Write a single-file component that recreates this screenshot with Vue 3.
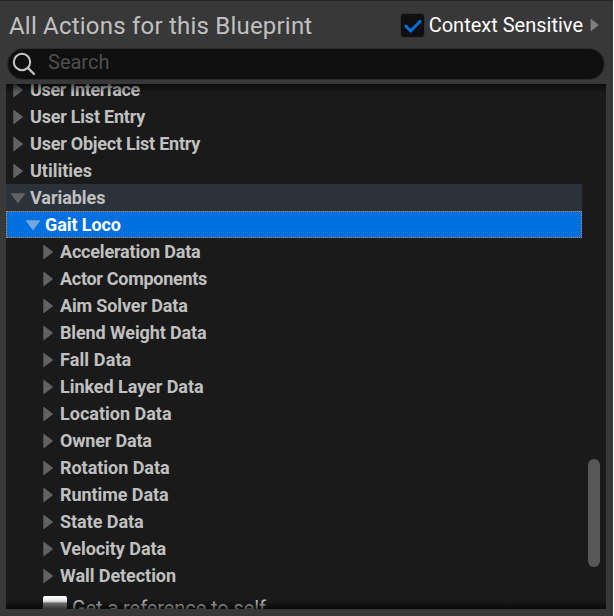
<script setup>
const rows = [
  { label: 'User Interface', level: 0, tracking: -0.36 },
  { label: 'User List Entry', level: 0, tracking: -0.22 },
  { label: 'User Object List Entry', level: 0, tracking: -0.23 },
  { label: 'Utilities', level: 0, tracking: 0 },
  { label: 'Variables', level: 0, open: true, state: 'parent', tracking: -0.05 },
  { label: 'Gait Loco', level: 1, open: true, state: 'selected', tracking: -0.08 },
  ...[
    ['Acceleration Data', -0.18],
    ['Actor Components', -0.29],
    ['Aim Solver Data', -0.14],
    ['Blend Weight Data', -0.12],
    ['Fall Data', 0.12],
    ['Linked Layer Data', -0.05],
    ['Location Data', 0],
    ['Owner Data', -0.18],
    ['Rotation Data', -0.04],
    ['Runtime Data', -0.06],
    ['State Data', -0.05],
    ['Velocity Data', -0.06],
    ['Wall Detection', -0.06],
  ].map(([label, tracking]) => ({ label, level: 2, tracking })),
]
</script>

<template>
  <main class="panel">
    <header class="header">
      <h1 class="title">All Actions for this Blueprint</h1>
      <label class="context">
        <span class="checkbox">
          <svg width="23" height="23" viewBox="0 0 23 23">
            <path d="M4.8 12.1 L9.7 17 L19.2 7.2" fill="none" stroke="#0070e0" stroke-width="2.9" stroke-linecap="round" stroke-linejoin="round" />
          </svg>
        </span>
        <span class="context-label">Context Sensitive</span>
        <svg class="expand" width="9" height="14" viewBox="0 0 9 14">
          <path d="M1 1.2 L8.4 7 L1 12.8 Z" fill="#808080" stroke="#808080" stroke-width="0.8" stroke-linejoin="round" />
        </svg>
      </label>
    </header>

    <div class="search">
      <svg class="lens" width="24" height="24" viewBox="0 0 24 24">
        <circle cx="10" cy="10" r="8.2" fill="none" stroke="#c8c8c8" stroke-width="2" />
        <path d="M15.9 15.9 L22 22" stroke="#c8c8c8" stroke-width="2.2" stroke-linecap="round" />
      </svg>
      <span class="placeholder">Search</span>
    </div>

    <section class="list">
      <div class="rows">
        <div v-for="row in rows" :key="row.label" class="row" :class="['level-' + row.level, row.state]">
          <svg v-if="row.open" class="arrow" width="16" height="16" viewBox="0 0 16 16">
            <path d="M1.3 3.8 H14.7 L8 12.8 Z" />
          </svg>
          <svg v-else class="arrow" width="16" height="16" viewBox="0 0 16 16">
            <path d="M3.8 1.3 V14.7 L12.6 8 Z" />
          </svg>
          <span class="label" :style="{ letterSpacing: row.tracking + 'px' }">{{ row.label }}</span>
        </div>
        <div class="row action">
          <span class="node-icon"></span>
          <span class="action-label">Get a reference to self</span>
        </div>
      </div>
      <div class="track"><div class="thumb"></div></div>
    </section>
  </main>
</template>

<style>
body { margin: 0; background: #fff; }
</style>

<style scoped>
.panel {
  box-sizing: border-box;
  width: 613px;
  height: 616px;
  padding: 0 7px 0 6px;
  display: flex;
  flex-direction: column;
  background: #383838;
  border-top: 1px solid #242424;
  border-bottom: 1px solid #3b3337;
  font-family: Roboto, "Liberation Sans", sans-serif;
  overflow: hidden;
}
.header {
  height: 48px;
  flex: none;
  display: flex;
  justify-content: space-between;
  padding: 0 7px 0 3px;
  white-space: nowrap;
}
.title {
  margin: 10px 0 0;
  font-size: 24px;
  line-height: 30px;
  font-weight: 400;
  color: #c0c0c0;
  letter-spacing: 0.21px;
}
.context { display: flex; align-items: flex-start; }
.checkbox {
  width: 23px;
  height: 23px;
  margin: 13px 5px 0 0;
  border-radius: 3px;
  background: #0f0f0f;
  box-shadow: 0 0 0 1px #303030;
}
.checkbox svg { display: block; }
.context-label {
  margin-top: 12px;
  font-size: 20px;
  line-height: 24px;
  color: #fff;
}
.expand { margin: 17px 0 0 7px; }
.search {
  box-sizing: border-box;
  width: 598px;
  height: 32px;
  flex: none;
  margin: -1px 0 4px 1px;
  padding: 0 5px;
  display: flex;
  border: 1px solid #2c2c2c;
  border-radius: 16px;
  background: #0f0f0f;
}
.lens { margin: 3px 12px 0 -1px; }
.placeholder {
  margin-top: 1px;
  font-size: 20px;
  line-height: 25px;
  color: #505050;
}
.list {
  position: relative;
  height: 525px;
  flex: none;
  display: flex;
  overflow: hidden;
  background: #1a1a1a;
}
.list::before, .list::after {
  content: "";
  position: absolute;
  left: 0;
  right: 0;
  height: 9px;
  z-index: 1;
}
.list::before { top: 0; background: linear-gradient(rgba(0,0,0,.6), transparent); }
.list::after { bottom: 0; background: linear-gradient(transparent, rgba(0,0,0,.6)); }
.rows { width: 576px; flex: none; margin-top: -8px; }
.row {
  box-sizing: border-box;
  height: 27px;
  display: flex;
  align-items: center;
  padding-left: 4px;
  color: #c0c0c0;
  white-space: nowrap;
}
.level-1 { padding-left: 19px; }
.level-2 { padding-left: 34px; }
.arrow {
  flex: none;
  margin-right: 4px;
  fill: #626262;
  stroke: #626262;
  stroke-width: 1;
  stroke-linejoin: round;
}
.label { font-size: 18px; font-weight: 700; line-height: 27px; }
.parent { background: #2b323a; }
.selected {
  background: #0070e0;
  color: #fff;
  outline: 1px dotted #d48a2a;
  outline-offset: -1px;
}
.selected .arrow { fill: #72a6dc; stroke: #72a6dc; }
.action { height: 34px; align-items: flex-start; padding: 7px 0 0 37px; }
.node-icon {
  width: 24px;
  height: 24px;
  margin-right: 5px;
  border-radius: 2px;
  background: linear-gradient(#fff 0, #e6e6e6 6px, #888 7px, #777 24px);
}
.action-label { font-size: 20px; line-height: 24px; letter-spacing: -0.08px; }
.track { flex: 1; padding: 375px 6px 0; }
.thumb { width: 12px; height: 108px; border-radius: 6px; background: #575757; }
</style>
